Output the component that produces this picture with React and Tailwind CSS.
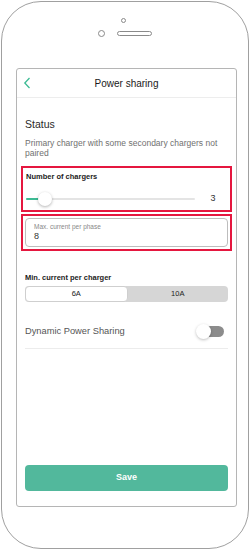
import React, { useState } from 'react'

const font = { fontFamily: '"Liberation Sans", Arial, sans-serif' }

const App = () => {
  const [dynamic, setDynamic] = useState(false)
  const [minCurrent, setMinCurrent] = useState('6A')

  return (
    <div className="w-[250px] h-[550px] bg-white p-px" style={font}>
      {/* phone frame */}
      <div className="h-[548px] rounded-[40px] border border-[#a0a0a0] flex flex-col">
        {/* camera + speaker */}
        <div className="h-[66px] flex flex-col items-center">
          <div className="mt-[16px] ml-[-4px] w-[5px] h-[5px] rounded-full border border-[#8a8a8a]" />
          <div className="mt-[7px] ml-[-1px] flex items-center gap-[12px]">
            <div className="w-[7px] h-[7px] rounded-full border border-[#8a8a8a]" />
            <div className="w-[35px] h-[5px] rounded-full border border-[#8a8a8a]" />
          </div>
        </div>

        {/* screen */}
        <div className="ml-[14px] w-[221px] h-[439px] border border-[#b5b5b5] rounded-[3px] flex flex-col">
          {/* header */}
          <div className="h-[29px] flex items-center border-b border-[#ededed] px-[6px]">
            <svg width="8" height="12" viewBox="0 0 8 12" className="shrink-0">
              <path d="M6.5 1 L1.8 6 L6.5 11" fill="none" stroke="#3dbb94" strokeWidth="1.3" />
            </svg>
            <div className="flex-1 text-center text-[10px] text-[#1a1a1a] font-medium pr-[8px]">Power sharing</div>
          </div>

          {/* body */}
          <div className="flex-1 flex flex-col px-[4px]">
            <div className="px-[4px] mt-[20px] text-[10.5px] leading-[13px] text-[#2a2a2a]">Status</div>
            <div className="px-[4px] mt-[7px] text-[8.5px] leading-[10px] text-[#707070]">
              Primary charger with some secondary chargers not paired
            </div>

            {/* number of chargers */}
            <div className="mt-[8px] h-[46px] border-2 border-[#e5173f] px-[3px] pt-[4px]">
              <div className="text-[7.5px] leading-[10px] font-bold text-[#222]">Number of chargers</div>
              <div className="mt-[10px] flex items-center">
                <div className="relative w-[169px] h-[2px] bg-[#e4e4e4] rounded-full">
                  <div className="w-[14px] h-[2px] bg-[#3dbb94] rounded-full" />
                  <div className="absolute left-[12px] top-[-6px] w-[14px] h-[14px] rounded-full bg-white shadow-[0_1px_3px_rgba(0,0,0,0.3)]" />
                </div>
                <div className="flex-1 text-center text-[9px] text-[#333] pl-[4px]">3</div>
              </div>
            </div>

            {/* max current */}
            <div className="mt-[2px] h-[37px] border-2 border-[#e5173f] px-[2px] py-[2px]">
              <div className="h-[29px] rounded-[4px] border border-[#bdbdbd] px-[8px] pt-[4px]">
                <div className="text-[6.5px] leading-[8px] text-[#888]">Max. current per phase</div>
                <div className="text-[9px] leading-[11px] text-[#333]">8</div>
              </div>
            </div>

            {/* min current */}
            <div className="px-[4px] mt-[22px] text-[7.5px] leading-[10px] font-bold text-[#222]">Min. current per charger</div>
            <div className="mx-[4px] mt-[3px] h-[16px] rounded-[4px] bg-[#d6d6d6] flex text-[7.5px] text-[#222]">
              {['6A', '10A'].map((v) => (
                <button
                  key={v}
                  onClick={() => setMinCurrent(v)}
                  className={`flex-1 flex items-center justify-center rounded-[4px] ${
                    minCurrent === v ? 'bg-white border border-[#cfcfcf]' : ''
                  }`}
                >
                  {v}
                </button>
              ))}
            </div>

            {/* dynamic power sharing */}
            <div className="mx-[4px] mt-[22px] pb-[9px] border-b border-[#ececec] flex items-center justify-between">
              <span className="text-[9.3px] text-[#555]">Dynamic Power Sharing</span>
              <button onClick={() => setDynamic(!dynamic)} className="relative w-[28px] h-[15px] flex items-center mr-[4px]">
                <div className={`ml-[6px] w-[22px] h-[11px] rounded-full ${dynamic ? 'bg-[#3dbb94]' : 'bg-[#8c8c8c]'}`} />
                <div className={`absolute top-0 w-[15px] h-[15px] rounded-full bg-white shadow-[0_1px_3px_rgba(0,0,0,0.25)] ${dynamic ? 'left-[13px]' : 'left-0'}`} />
              </button>
            </div>

            <div className="flex-1" />

            <button className="mx-[4px] mb-[15px] h-[26px] rounded-[4px] bg-[#52b89c] text-white text-[9px] font-bold">
              Save
            </button>
          </div>
        </div>
      </div>
    </div>
  )
}

export default App
